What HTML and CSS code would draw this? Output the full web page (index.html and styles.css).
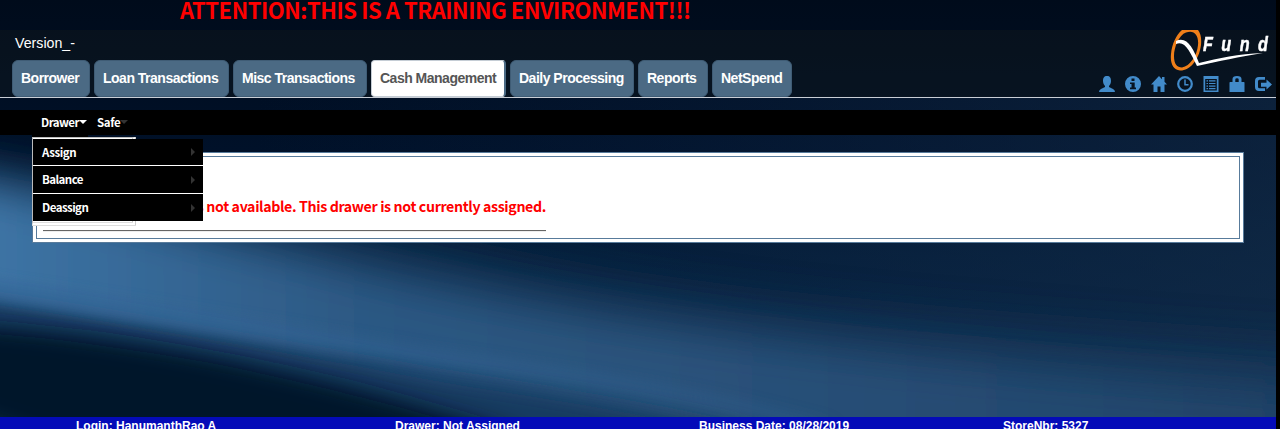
FILE: index.html
```html
<!DOCTYPE html>
<html lang="en">
<head>
<meta charset="utf-8">
<title>QFund - Cash Management</title>
<link rel="stylesheet" href="styles.css">
</head>
<body>
<div class="page">
  <svg class="backdrop" viewBox="0 0 1276 429" preserveAspectRatio="none" aria-hidden="true">
    <defs>
      <linearGradient id="base" x1="0" y1="0" x2="0" y2="1"><stop offset="0" stop-color="#000b1b"/><stop offset=".35" stop-color="#001129"/><stop offset=".6" stop-color="#041d38"/><stop offset="1" stop-color="#0c294a"/></linearGradient>
      <linearGradient id="side" x1="0" y1="0" x2="1" y2="0"><stop offset=".2" stop-color="#0b2347" stop-opacity="0"/><stop offset="1" stop-color="#142d4a" stop-opacity=".6"/></linearGradient>
      <linearGradient id="beam" x1="0" y1="0" x2="1" y2="0"><stop offset="0" stop-color="#4079ab"/><stop offset=".3" stop-color="#2c5883"/><stop offset=".6" stop-color="#284f77"/><stop offset="1" stop-color="#1d4065"/></linearGradient>
      <linearGradient id="ridge" x1="0" y1="0" x2="1" y2="0"><stop offset="0" stop-color="#3a6c9f"/><stop offset="1" stop-color="#2b5985"/></linearGradient>
      <filter id="wide" x="-20%" y="-30%" width="140%" height="160%"><feGaussianBlur stdDeviation="32 20"/></filter>
      <filter id="mid" x="-20%" y="-30%" width="140%" height="160%"><feGaussianBlur stdDeviation="20 10"/></filter>
      <filter id="fine" x="-20%" y="-30%" width="140%" height="160%"><feGaussianBlur stdDeviation="12 6"/></filter>
    </defs>
    <rect width="1276" height="429" fill="url(#base)"/>
    <rect y="98" width="1276" height="331" fill="url(#side)"/>
    <path d="M-80 150C120 180 300 220 520 265S1000 325 1360 350V500H-80Z" fill="#17395a" opacity=".7" filter="url(#wide)"/>
    <path d="M-80 170C60 195 220 240 420 282S820 355 1400 395V520H-80Z" fill="url(#beam)" filter="url(#wide)"/>
    <path d="M-80 288C110 312 300 350 450 377C580 397 700 417 770 440V520H-80Z" fill="#173a60" filter="url(#mid)"/>
    <path d="M-90 322C80 328 290 362 500 430V500H200Q50 440-90 400Z" fill="#00142b" filter="url(#mid)"/>
    <path d="M-60 272C110 296 270 322 420 347C560 367 690 385 820 420V432C690 396 560 378 410 359C260 340 110 318-60 290Z" fill="url(#ridge)" opacity=".6" filter="url(#fine)"/>
  </svg>
  <div class="attention">ATTENTION:THIS IS A TRAINING ENVIRONMENT!!!</div>
  <header class="header">
    <div class="left">
      <div class="version">Version_-</div>
      <nav class="tabs">
        <a class="tab borrower">Borrower</a><a class="tab loan">Loan Transactions</a><a class="tab misc">Misc Transactions</a><a class="tab cash">Cash Management</a><a class="tab daily">Daily Processing</a><a class="tab reports">Reports</a><a class="tab netspend">NetSpend</a>
      </nav>
    </div>
    <div class="right">
      <div class="logo">
        <svg class="mark" width="100" height="42" viewBox="0 0 100 42">
          <path fill="#ef7f1a" fill-rule="evenodd" d="M12 0H28Q32 5 31 15C29 31 19 41 10 40.5C3 40 0 33 1 24C2 14 6 5 12 0ZM16 2.5C9 5 4 17 4 26C4 34 7 37.5 12 37.5C20 36 27 26 28 15C29 5 24-.5 16 2.5Z"/>
          <path fill="#fff" d="M6 11C17 6 23 18 29 33C49 28 68 24 93 23C69 27 49 31 27 36C20 22 15 10 6 14Z"/>
        </svg>
        <span class="word">Fund</span>
      </div>
      <div class="icons">
        <svg viewBox="0 0 16 16"><path d="M8 0C5 0 4 2 4 5C4 7 5 9 6 10V11L2 13Q0 14 0 16H16Q16 14 14 13L10 11V10C11 9 12 7 12 5C12 2 11 0 8 0Z"/></svg>
        <svg viewBox="0 0 16 16"><path fill-rule="evenodd" d="M8 0A8 8 0 1 0 8 16A8 8 0 0 0 8 0ZM6.5 2.5H9.5V5H6.5ZM5 6.5H9.7V11.5H11V13.2H5V11.5H6.5V8H5Z"/></svg>
        <svg viewBox="0 0 16 16"><path d="M8 0L0 8.5H2.5V16H6.5V10.5H9.5V16H13.5V8.5H16L13.5 5.8V1H11V3.2Z"/></svg>
        <svg viewBox="0 0 16 16"><circle class="stroke" cx="8" cy="8" r="6.8"/><path class="thin" d="M8 3.5V8.8H11.5"/></svg>
        <svg viewBox="0 0 16 16"><path fill-rule="evenodd" d="M.5 0H15.5V16H.5ZM2.2 3V14.4H13.8V3Z"/><path d="M3.5 4.3H5V5.5H3.5ZM6 4.3H12.5V5.5H6ZM3.5 6.9H5V8.1H3.5ZM6 6.9H12.5V8.1H6ZM3.5 9.5H5V10.7H3.5ZM6 9.5H12.5V10.7H6ZM3.5 12.1H5V13.3H3.5ZM6 12.1H12.5V13.3H6Z"/></svg>
        <svg viewBox="0 0 16 16"><path fill-rule="evenodd" d="M1 6H3.5V3Q3.5 0 8 0T12.5 3V6H15Q15.5 6 15.5 7V16H.5V7Q.5 6 1 6ZM6.3 6H9.7V3.5Q9.7 2.3 8 2.3T6.3 3.5Z"/></svg>
        <svg viewBox="0 0 17 16"><path d="M10 1H4Q0 1 0 5V11Q0 15 4 15H10V12.3H4.5Q3 12.3 3 10.8V5.2Q3 3.7 4.5 3.7H10ZM11.5 3.5V6.8H6V10.7H11.5V13.5L17 8.5Z"/></svg>
      </div>
    </div>
  </header>
  <nav class="menubar">
    <div class="menu drawer"><span>Drawer</span><i class="caret"></i>
      <div class="shadow"></div>
      <div class="dropdown">
        <a><span>Assign</span><i></i></a>
        <a><span>Balance</span><i></i></a>
        <a><span>Deassign</span><i></i></a>
      </div>
    </div>
    <div class="menu safe"><span>Safe</span><i class="caret dim"></i></div>
  </nav>
  <main class="panel"><div class="inner">
    <p class="message">s not available. This drawer is not currently assigned.</p>
    <div class="rule"></div>
  </div></main>
  <footer class="footer"><span>Login: HanumanthRao A</span><span>Drawer: Not Assigned</span><span>Business Date: 08/28/2019</span><span>StoreNbr: 5327</span></footer>
</div>
</body>
</html>
```
FILE: styles.css
```css
* { box-sizing: border-box; }
body { margin: 0; background: #000; overflow: hidden; font-family: "Liberation Sans", sans-serif; }
.page { position: relative; width: 1276px; height: 429px; overflow: hidden; display: flex; flex-direction: column; isolation: isolate; }
.backdrop { position: absolute; inset: 0; width: 1276px; height: 429px; z-index: -1; }
.attention { height: 30px; flex: none; padding-left: 180px; color: #f00; font: bold 22px/19px "Noto Sans CJK SC", sans-serif; white-space: nowrap; letter-spacing: -.45px; }
.header { height: 68px; flex: none; display: flex; justify-content: space-between; border-bottom: 1px solid #c9ced6; background: rgba(20, 28, 30, .35); }
.left { padding-left: 12px; }
.version { height: 30px; padding: 5px 0 0 3px; color: #fff; font-size: 14.2px; line-height: 17px; }
.tabs { display: flex; gap: 4px; }
.tab { height: 37px; border-radius: 6px; background: #4b6a84; border: 1px solid #3f5c75; color: #fff; font-weight: bold; font-size: 14px; letter-spacing: -.5px; line-height: 35px; padding-left: 8px; white-space: nowrap; }
.borrower { width: 78px; }
.loan { width: 135px; }
.misc { width: 134px; }
.cash { width: 135px; background: #fff; color: #555; border-color: #c5cdd5; border-right: 2px solid #4b6a84; border-radius: 4px; }
.daily { width: 124px; }
.reports { width: 70px; }
.netspend { width: 80px; }
.right { width: 180px; padding-right: 4px; }
.logo { height: 46px; padding-left: 74px; display: flex; }
.mark { flex: none; }
.word { margin: 3px 0 0 -67px; width: 70px; color: #fff; font: italic bold 21px/22px "Liberation Sans", sans-serif; letter-spacing: 11px; white-space: nowrap; transform: scaleX(.77); transform-origin: left; -webkit-text-stroke: .5px #fff; }
.icons { display: flex; justify-content: space-between; padding-left: 3px; }
.icons svg { width: 16px; height: 16px; fill: #428bca; }
.icons svg:last-child { width: 17px; }
.icons .stroke { fill: none; stroke: #428bca; stroke-width: 2.2; }
.icons .thin { fill: none; stroke: #428bca; stroke-width: 1.5; }
.menubar { flex: none; height: 25px; margin-top: 12px; padding-left: 32px; background: #000; display: flex; position: relative; z-index: 2; color: #fff; font: bold 11.5px/24px "Noto Sans CJK SC", sans-serif; letter-spacing: -.55px; }
.menu { position: relative; display: flex; align-items: center; height: 25px; padding-left: 9px; }
.drawer { width: 56px; height: 27px; padding-bottom: 3px; background: #000; }
.safe { padding-bottom: 1px; letter-spacing: -.4px; }
.caret { flex: none; border: 4px solid transparent; border-top-color: #fff; border-bottom: 0; }
.caret.dim { border-top-color: #333; }
.shadow { position: absolute; left: 0; top: 27px; width: 104px; height: 89px; background: #fff; border: 1px solid #bbb; border-right: 4px double #ccc; border-bottom: 4px double #ddd; }
.dropdown { position: absolute; left: 1px; top: 29px; width: 170px; background: #fff; display: flex; flex-direction: column; gap: 1px; }
.dropdown a { height: 27px; padding: 0 8px 0 9px; background: #000; display: flex; align-items: center; justify-content: space-between; line-height: 25px; }
.dropdown a:first-child { height: 26px; letter-spacing: -.4px; }
.dropdown i { border: 4px solid transparent; border-left-color: #333; border-right: 0; }
.panel { flex: none; width: 1212px; height: 91px; margin: 17px 0 0 32px; padding: 3px; background: #fff; border: 1px solid #587b9b; }
.inner { height: 83px; border: 1px solid #587b9b; padding: 39px 0 0 6px; }
.message { margin: 0; width: 503px; text-align: right; color: #f00; font: bold 14.2px/20px "Noto Sans CJK SC", sans-serif; letter-spacing: -.37px; white-space: nowrap; }
.rule { width: 503px; height: 2px; margin-top: 14px; border-top: 1px solid #666; border-bottom: 1px solid #eee; }
.footer { height: 12px; flex: none; margin-top: auto; padding-left: 76px; background: #040bb8; display: grid; grid-template-columns: 319px 304px 304px 1fr; color: #fff; font-weight: bold; font-size: 12px; line-height: 18px; white-space: nowrap; overflow: hidden; }
```
